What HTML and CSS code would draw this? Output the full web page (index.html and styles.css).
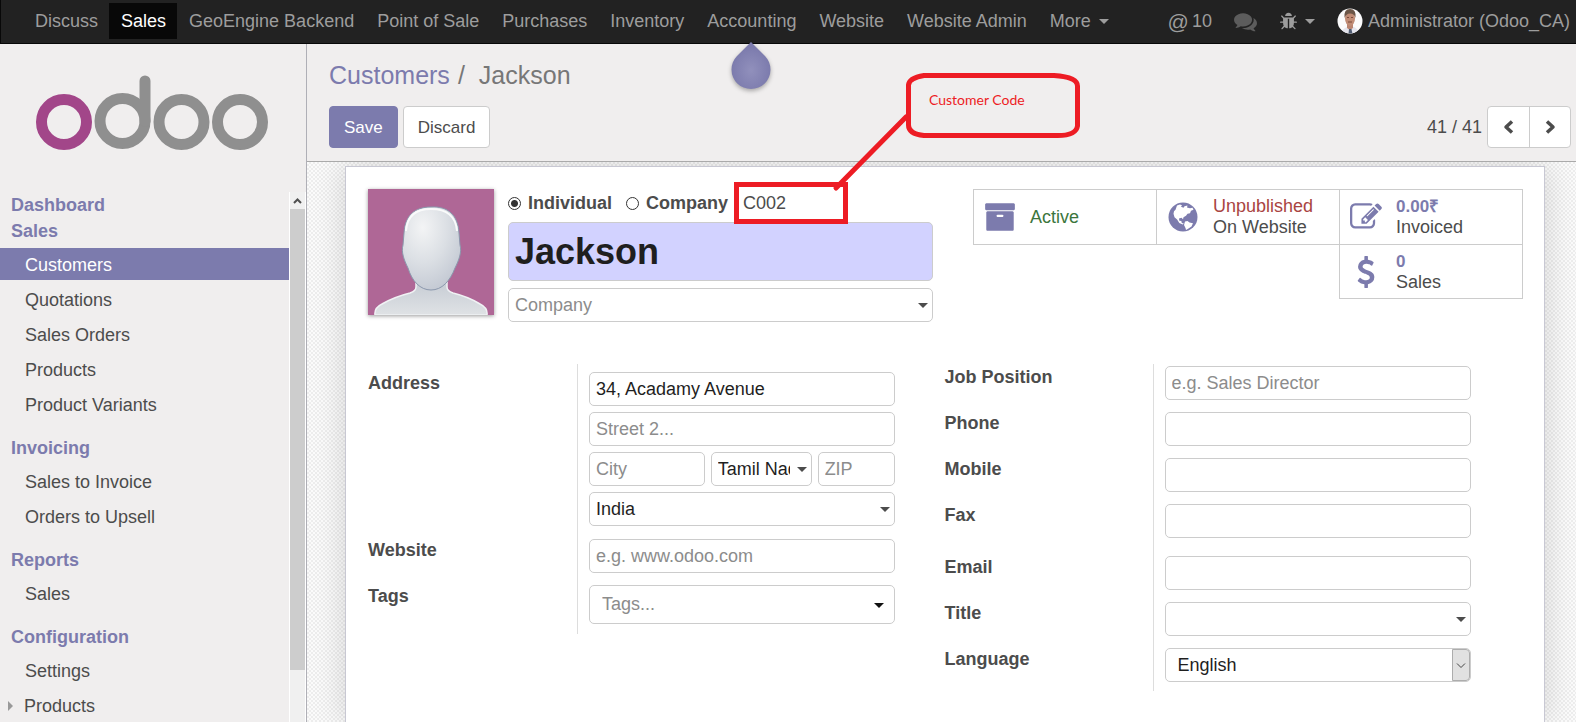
FILE: index.html
```html
<!DOCTYPE html>
<html lang="en">
<head>
<meta charset="utf-8">
<title>Jackson - Odoo</title>
<link rel="stylesheet" href="styles.css">
</head>
<body>
<nav class="navbar">
  <ul class="nav-menu">
    <li><a href="#">Discuss</a></li>
    <li><a href="#" class="current">Sales</a></li>
    <li><a href="#">GeoEngine Backend</a></li>
    <li><a href="#">Point of Sale</a></li>
    <li><a href="#">Purchases</a></li>
    <li><a href="#">Inventory</a></li>
    <li class="has-tip"><a href="#">Accounting</a>
      <svg class="tip" viewBox="0 0 44 54" aria-hidden="true">
        <defs><radialGradient id="drop" cx=".5" cy=".6" r=".5"><stop offset="0" stop-color="#9190bc"/><stop offset="1" stop-color="#7c7bad"/></radialGradient></defs>
        <path d="M22 0 L36 14 A19.500 19.500 0 1 1 8 14 Z" fill="url(#drop)"/>
      </svg>
    </li>
    <li><a href="#">Website</a></li>
    <li><a href="#">Website Admin</a></li>
    <li><a href="#">More <span class="caret"></span></a></li>
  </ul>
  <ul class="nav-tools">
    <li><a href="#" class="mentions"><span class="at">@</span> 10</a></li>
    <li><a href="#" class="dim" aria-label="Messages"><svg width="23" height="23" viewBox="0 0 1792 1792"><path d="M1408 768q0 139-94 257t-256.500 186.500-353.500 68.500q-86 0-176-16-124 88-278 128-36 9-86 16h-3q-11 0-20.500-8t-11.500-21q-1-3-1-6.500t.5-6.500 2-6l2.500-5 3.500-5.500 4-5 4.500-5 4-4.500q5-6 23-25t26-29.500 22.500-29 25-38.500 20.500-44q-124-72-195-177t-71-224q0-139 94-257t256.500-186.500 353.500-68.500 353.500 68.500 256.500 186.500 94 257zm384 256q0 120-71 224.500t-195 176.500q10 24 20.500 44t25 38.500 22.500 29 26 29.500 23 25q1 1 4 4.500t4.500 5 4 5 3.500 5.500l2.500 5 2 6 .5 6.500-1 6.500q-3 14-13 22t-22 7q-50-7-86-16-154-40-278-128-90 16-176 16-271 0-472-132 58 4 88 4 161 0 309-45t264-129q125-92 192-212t67-254q0-77-23-152 129 71 204 178t75 230z"/></svg></a></li>
    <li><a href="#" aria-label="Debug"><svg width="19" height="19" viewBox="0 0 1792 1792"><path d="M1696 960q0 26-19 45t-45 19h-224q0 171-67 290l208 209q19 19 19 45t-19 45q-18 19-45 19t-45-19l-198-197q-5 5-15 13t-42 28.500-65 36.500-82 29-97 13v-896h-128v896q-51 0-101.500-13.500t-87-33-66-39-43.500-32.500l-15-14-183 207q-20 21-48 21-24 0-43-16-19-18-20.500-44.500t15.500-46.500l202-227q-58-114-58-274h-224q-26 0-45-19t-19-45 19-45 45-19h224v-294l-173-173q-19-19-19-45t19-45 45-19 45 19l173 173h844l173-173q19-19 45-19t45 19 19 45-19 45l-173 173v294h224q26 0 45 19t19 45zm-480-576h-640q0-133 93.500-226.500t226.500-93.500 226.500 93.500 93.500 226.500z"/></svg><span class="caret"></span></a></li>
    <li><a href="#">
      <svg class="user-pic" width="26" height="26" viewBox="0 0 26 26" aria-hidden="true">
        <defs><clipPath id="round"><circle cx="13" cy="13" r="12.500"/></clipPath></defs>
        <g clip-path="url(#round)">
          <rect width="26" height="26" fill="#fbfbfc"/>
          <path d="M3 26 Q5 21 10 19 L17 19 Q21 21 23 26Z" fill="#e4e4ec"/>
          <path d="M10 16h6v4l-3 2-3-2z" fill="#b98470"/>
          <ellipse cx="13" cy="10.500" rx="5" ry="7.500" fill="#c08c76"/>
          <path d="M7.500 10Q6.500 1 13 1Q19.500 1 18.500 10Q17.500 5.500 13 5.500Q9 5.500 7.500 10Z" fill="#6b5648"/>
          <path d="M10 9.500h2M14 9.500h2M11 14h4" stroke="#7a4a3b" stroke-width="1"/>
          <path d="M12 21h2.500l1 5h-4z" fill="#4e5a70"/>
        </g>
      </svg>
      Administrator (Odoo_CA)</a></li>
  </ul>
</nav>
<div class="shell">
  <aside class="sidebar">
    <svg class="logo" viewBox="0 0 234 76" role="img" aria-label="odoo">
      <g fill="none" stroke-width="11">
        <circle cx="29" cy="47" r="22.500" stroke="#a24689"/>
        <g stroke="#8f8f8f">
          <circle cx="87.500" cy="46" r="22.500"/>
          <path d="M110 6v40" stroke-linecap="round"/>
          <circle cx="146.500" cy="47" r="22.500"/>
          <circle cx="205" cy="47" r="22.500"/>
        </g>
      </g>
    </svg>
    <div class="menu-area">
      <div class="menu">
        <h2>Dashboard</h2>
        <section>
          <h2>Sales</h2>
          <ul>
            <li><a href="#" class="active">Customers</a></li>
            <li><a href="#">Quotations</a></li>
            <li><a href="#">Sales Orders</a></li>
            <li><a href="#">Products</a></li>
            <li><a href="#">Product Variants</a></li>
          </ul>
        </section>
        <section class="spaced">
          <h2>Invoicing</h2>
          <ul>
            <li><a href="#">Sales to Invoice</a></li>
            <li><a href="#">Orders to Upsell</a></li>
          </ul>
        </section>
        <section class="spaced">
          <h2>Reports</h2>
          <ul>
            <li><a href="#">Sales</a></li>
          </ul>
        </section>
        <section class="spaced">
          <h2>Configuration</h2>
          <ul>
            <li><a href="#">Settings</a></li>
            <li><a href="#" class="toggle">Products</a></li>
          </ul>
        </section>
      </div>
      <div class="scrollbar" aria-hidden="true">
        <svg width="15" height="17" viewBox="0 0 15 17"><path d="M4 11 L7.500 7.500 L11 11" fill="none" stroke="#505050" stroke-width="2"/></svg>
        <div class="thumb"></div>
      </div>
    </div>
  </aside>
  <main class="main">
    <header class="panel">
      <div class="breadcrumb"><a href="#">Customers</a><span class="slash">/</span><span>Jackson</span></div>
      <div class="actions">
        <button type="button" class="btn primary">Save</button>
        <button type="button" class="btn">Discard</button>
        <div class="pager">
          <span>41 / 41</span>
          <div class="pager-buttons">
            <button type="button" aria-label="Previous"><svg width="18" height="18" viewBox="0 0 18 18"><path d="M12 3.500 L6 9 L12 14.500" fill="none" stroke="currentColor" stroke-width="3.500" stroke-linejoin="round"/></svg></button>
            <button type="button" aria-label="Next"><svg width="18" height="18" viewBox="0 0 18 18"><path d="M6 3.500 L12 9 L6 14.500" fill="none" stroke="currentColor" stroke-width="3.500" stroke-linejoin="round"/></svg></button>
          </div>
        </div>
      </div>
    </header>
    <div class="content">
      <form class="sheet">
        <div class="top">
          <svg class="avatar" viewBox="0 0 126 126" role="img" aria-label="Contact picture">
            <defs>
              <radialGradient id="face" cx=".35" cy=".25" r=".85"><stop offset="0" stop-color="#f3f4f5"/><stop offset=".5" stop-color="#dbdfe4"/><stop offset="1" stop-color="#bfc5d0"/></radialGradient>
              <linearGradient id="body" x1="0" y1="0" x2="0" y2="1"><stop offset="0" stop-color="#c3c9d2"/><stop offset="1" stop-color="#dfe2e5"/></linearGradient>
            </defs>
            <rect width="126" height="126" fill="#af6796"/>
            <path d="M7 126 Q6 119 14 115 Q26 108 42 104 Q48 102 48 98 L48 88 L79 88 L79 98 Q79 102 85 104 Q101 108 112 115 Q120 119 119 126Z" fill="url(#body)" stroke="#f0f2f4" stroke-width="1.500"/>
            <path d="M63 18 C80 17 90 26 91 44 L92 56 C94 63 91 71 87 79 C82 92 74 101 63 101 C52 101 44 92 40 79 C36 71 33 63 35 56 L36 44 C37 27 46 18 63 18Z" fill="url(#face)" stroke="#8b98ad" stroke-width="1"/>
            <path d="M38 42 C39 27 47 20 63 20 C79 20 88 28 89 42" fill="none" stroke="#fafbfb" stroke-width="2"/>
          </svg>
          <div class="title">
            <div class="kind">
              <input type="radio" name="kind" id="individual" checked><label for="individual">Individual</label>
              <input type="radio" name="kind" id="company-kind"><label for="company-kind">Company</label>
              <div class="code">
                <input type="text" value="C002" aria-label="Customer Code">
                <svg class="callout" viewBox="0 0 350 156" aria-hidden="true">
                  <g fill="none" stroke="#ed1c24" stroke-width="5">
                    <rect x="4.500" y="114.500" width="109" height="37"/>
                    <path d="M104 118 L174 47" stroke-linecap="round"/>
                    <path d="M192 5.500 H322 Q345.500 7 345.500 16 V56 Q344 66 324 65.500 H192 Q176 64 176.500 54 V15 Q177 8 192 5.500Z"/>
                  </g>
                  <text x="197" y="35" class="callout-text">Customer Code</text>
                </svg>
              </div>
            </div>
            <input type="text" class="field name" value="Jackson" aria-label="Name">
            <div class="pick"><select class="field empty" aria-label="Company"><option>Company</option></select></div>
          </div>
          <div class="stats">
            <button type="button" class="stat">
              <svg width="32" height="32" viewBox="0 0 1792 1792"><path d="M1088 832q0-26-19-45t-45-19h-256q-26 0-45 19t-19 45 19 45 45 19h256q26 0 45-19t19-45zm576-192v960q0 26-19 45t-45 19h-1408q-26 0-45-19t-19-45v-960q0-26 19-45t45-19h1408q26 0 45 19t19 45zm64-448v256q0 26-19 45t-45 19h-1536q-26 0-45-19t-19-45v-256q0-26 19-45t45-19h1536q26 0 45 19t19 45z"/></svg>
              <span class="green">Active</span>
            </button>
            <button type="button" class="stat">
              <svg width="32" height="32" viewBox="0 0 32 32"><circle cx="16" cy="16" r="14.500"/><path fill="#fff" d="M10 4.500l3-1 2 .8-1 1.500 2.500 1 1-1.500 3-.8-.5 2 3 .7 2.500-.5 1 2-2.500 1-1 2.500-2.500.5-1.500 2-2.500 1.500-.5 2-1.500-1.500-2.500.8.3 2.200 2 .2.500 2 2 .5-1 1.200-3.500-1.700-2.200-3.500-2.600-2.200-1-3.500.5-2.500 1.500-1.500zM18 20.500l2.500-.5 2 1.500 3.500.8-1.500 3.200-3 2-2.500 1.500-.5-2-1.500-3z"/></svg>
              <span><span class="red">Unpublished</span><br>On Website</span>
            </button>
            <button type="button" class="stat">
              <svg width="32" height="32" viewBox="0 0 1792 1792"><path d="M888 1184l116-116-152-152-116 116v56h96v96h56zm440-720q-16-16-33 1l-350 350q-17 17-1 33t33-1l350-350q17-17 1-33zm80 594v190q0 119-84.500 203.500t-203.500 84.500h-832q-119 0-203.500-84.500t-84.500-203.500v-832q0-119 84.500-203.500t203.500-84.500h832q63 0 117 25 15 7 18 23 3 17-9 29l-49 49q-14 14-32 8-23-6-45-6h-832q-66 0-113 47t-47 113v832q0 66 47 113t113 47h832q66 0 113-47t47-113v-126q0-13 9-22l64-64q15-15 35-7t20 29zm-96-738l288 288-672 672h-288v-288zm444 132l-92 92-288-288 92-92q28-28 68-28t68 28l152 152q28 28 28 68t-28 68z"/></svg>
              <span><b>0.00₹</b><br>Invoiced</span>
            </button>
            <button type="button" class="stat last">
              <svg width="32" height="32" viewBox="0 0 1792 1792"><path d="M1362 1185q0 153-99.500 263.500t-258.500 136.500v175q0 14-9 23t-23 9h-135q-13 0-22.500-9.500t-9.500-22.500v-175q-66-9-127.500-31t-101.500-44.500-74-48-46.500-37.500-17.500-18q-17-21-2-41l103-135q7-10 23-12 15-2 24 9l2 2q113 99 243 125 37 8 74 8 81 0 142.500-43t61.500-122q0-28-15-53t-33.500-42-58.500-37.500-66-32-80-32.500q-39-16-61.500-25t-61.500-26.500-62.500-31-56.500-35.500-53.500-42.500-43.500-49-35.500-58-21-66.500-8.500-78q0-138 98-242t255-134v-180q0-13 9.500-22.500t22.500-9.500h135q14 0 23 9t9 23v176q57 6 110.500 23t87 33.500 63.500 37.500 39 29 15 14q17 18 5 38l-81 146q-8 15-23 16-14 3-27-7-3-3-14.500-12t-39-26.500-58.500-32-74.500-26-85.500-11.500q-95 0-155 43t-60 111q0 26 8.500 48t29.500 41.500 39.500 33 56 31 60.500 27 70 27.500q53 20 81 31.500t76 35 75.500 42.500 62 50 53 63.500 31.500 76.500 13 94z"/></svg>
              <span><b>0</b><br>Sales</span>
            </button>
          </div>
        </div>
        <div class="groups">
          <div class="group left">
            <div class="row">
              <label for="street">Address</label>
              <div class="value stack">
                <input type="text" class="field" id="street" value="34, Acadamy Avenue">
                <input type="text" class="field" placeholder="Street 2..." aria-label="Street 2">
                <div class="city">
                  <input type="text" class="field" placeholder="City" aria-label="City">
                  <div class="pick state"><select class="field" aria-label="State"><option>Tamil Nadu</option></select></div>
                  <input type="text" class="field" placeholder="ZIP" aria-label="ZIP">
                </div>
                <div class="pick"><select class="field" aria-label="Country"><option>India</option></select></div>
              </div>
            </div>
            <div class="row">
              <label for="website">Website</label>
              <div class="value"><input type="text" class="field" id="website" placeholder="e.g. www.odoo.com"></div>
            </div>
            <div class="row">
              <label for="tags">Tags</label>
              <div class="value"><div class="pick tags"><input type="text" class="field" id="tags" placeholder="Tags..."></div></div>
            </div>
          </div>
          <div class="group right">
            <div class="row"><label for="job">Job Position</label><div class="value"><input type="text" class="field" id="job" placeholder="e.g. Sales Director"></div></div>
            <div class="row"><label for="phone">Phone</label><div class="value"><input type="text" class="field" id="phone"></div></div>
            <div class="row"><label for="mobile">Mobile</label><div class="value"><input type="text" class="field" id="mobile"></div></div>
            <div class="row after"><label for="fax">Fax</label><div class="value"><input type="text" class="field" id="fax"></div></div>
            <div class="row"><label for="email">Email</label><div class="value"><input type="text" class="field" id="email"></div></div>
            <div class="row"><label for="ptitle">Title</label><div class="value"><div class="pick"><select class="field" id="ptitle"><option></option></select></div></div></div>
            <div class="row"><label for="lang">Language</label><div class="value"><div class="lang">
              <select class="field" id="lang"><option>English</option></select>
              <svg viewBox="0 0 18 32" aria-hidden="true"><path d="M.500.500H14q3.500 0 3.500 3.500v24q0 3.500-3.500 3.500H.500z" fill="#e1e1e1" stroke="#adadad"/><path d="M5 14.500l4 4 4-4" fill="none" stroke="#444"/></svg>
            </div></div></div>
          </div>
        </div>
      </form>
    </div>
  </main>
</div>
</body>
</html>
```
FILE: styles.css
```css
* { box-sizing: border-box; }
body {
  margin: 0;
  height: 100vh;
  overflow: hidden;
  display: flex;
  flex-direction: column;
  font-family: "Liberation Sans", Arial, sans-serif;
  font-size: 18px;
  line-height: 21px;
  color: #4c4c4c;
  background: #f0eeee;
}
ul { list-style: none; margin: 0; padding: 0; }
a { color: inherit; text-decoration: none; }
button, input, select { font: inherit; color: inherit; margin: 0; }
svg { fill: currentColor; flex: none; }

/* Top bar */
.navbar {
  flex: none;
  display: flex;
  justify-content: space-between;
  height: 44px;
  padding: 3px 0 4px 22px;
  background: #222;
  border-bottom: 1px solid #080808;
  border-left: 1px solid #080808;
  color: #9d9d9d;
  white-space: nowrap;
}
.nav-menu, .nav-tools { display: flex; }
.nav-menu a, .nav-tools a { display: flex; align-items: center; height: 36px; }
.nav-menu a { padding: 0 11px 0 12px; }
.nav-tools a { padding: 0 11px; gap: 5px; }
.nav-tools .mentions { gap: 3px; }
.nav-tools li:last-child a { padding-right: 6px; }
.nav-menu .current { background: #080808; color: #fff; }
.nav-tools .dim { color: #5c5c5c; }
.at { font-size: 21px; }
.caret {
  border: 5px solid transparent;
  border-top-color: currentColor;
  border-bottom: 0;
  margin-left: 8px;
}
.nav-tools .caret { margin-left: 2px; }
.has-tip { position: relative; }
.tip {
  position: absolute;
  left: 50%;
  top: 39px;
  width: 44px;
  height: 54px;
  margin-left: -22px;
  z-index: 2;
  filter: drop-shadow(0 2px 2px rgba(0, 0, 0, .3));
}

.shell { flex: 1; display: flex; min-height: 0; }

/* Sidebar */
.sidebar {
  flex: none;
  width: 307px;
  display: flex;
  flex-direction: column;
  border-right: 1px solid #afafb6;
}
.logo { width: 234px; margin: 31px 0 41px 35px; }
.menu-area { flex: 1; display: flex; min-height: 0; }
.menu { flex: 1; overflow: hidden; }
.menu h2 { margin: 0; padding-left: 11px; font-size: 18px; line-height: 26px; color: #7c7bad; }
.menu ul { display: flex; flex-direction: column; gap: 3px; margin-top: 4px; }
.menu .spaced { margin-top: 15px; }
.menu li a { display: block; padding: 2px 0 0 25px; line-height: 30px; }
.menu .active { background: #7c7bad; color: #fff; }
.menu .toggle { display: flex; align-items: center; padding-left: 8px; gap: 11px; }
.toggle::before {
  content: "";
  border: 5px solid transparent;
  border-left-color: #999;
  border-right: 0;
}
.scrollbar {
  width: 17px;
  display: flex;
  flex-direction: column;
  background: #f0f0f0;
  border-left: 1px solid #fff;
  border-right: 1px solid #fff;
}
.thumb { height: 87%; background: #cdcdcd; }

/* Control panel */
.main { flex: 1; min-width: 0; display: flex; flex-direction: column; }
.panel {
  position: relative;
  z-index: 1;
  flex: none;
  padding: 16px 5px 13px 22px;
  background: #f0eeee;
  border-bottom: 1px solid #aaa;
}
.breadcrumb { font-size: 25px; line-height: 30px; color: #777; }
.breadcrumb a { color: #7c7bad; }
.breadcrumb .slash { margin: 0 14px 0 8px; }
.actions { display: flex; align-items: center; gap: 5px; margin-top: 16px; }
.btn {
  height: 42px;
  padding: 0 14px;
  font-size: 17px;
  background: #fff;
  border: 1px solid #ccc;
  border-radius: 4px;
}
.btn.primary { background: #7c7bad; border-color: #7c7bad; color: #fff; }
.pager { margin-left: auto; display: flex; align-items: center; gap: 5px; }
.pager-buttons { display: flex; border: 1px solid #ccc; border-radius: 4px; background: #fff; }
.pager-buttons button {
  display: grid;
  place-items: center;
  width: 41px;
  height: 40px;
  padding: 0;
  border: 0;
  background: none;
}
.pager-buttons button + button { border-left: 1px solid #ccc; }

/* Form sheet */
.content {
  flex: 1;
  display: flex;
  min-height: 0;
  padding: 4px 31px 0 38px;
  background: conic-gradient(#ededed 25%, #fbfbfb 0 50%, #ededed 0 75%, #fbfbfb 0) 0 0 / 4px 4px;
}
.sheet {
  flex: 1;
  min-width: 0;
  padding: 22px 21px 0 22px;
  background: #fff;
  border: 1px solid #c8c8d3;
  border-bottom: 0;
  box-shadow: 0 0 30px rgba(0, 0, 0, .15);
}
.top { display: flex; align-items: flex-start; }
.avatar { width: 126px; height: 126px; box-shadow: 0 1px 4px rgba(0, 0, 0, .4); }
.title { width: 425px; margin-left: 14px; }
.kind { display: flex; align-items: center; height: 27px; padding-top: 2px; margin-bottom: 6px; font-weight: bold; }
.kind input[type="radio"] {
  appearance: none;
  width: 13px;
  height: 13px;
  margin-right: 7px;
  border: 1px solid #333;
  border-radius: 50%;
  background: #fff;
}
.kind input[type="radio"]:checked { background: radial-gradient(circle, #333 0 3px, #fff 4px); }
.kind label + input[type="radio"] { margin-left: 14px; }
.code { position: relative; margin-left: 15px; }
.code input { width: 96px; padding: 0; border: 0; background: none; font-weight: normal; outline: 0; }
.callout { position: absolute; left: -11px; bottom: -12px; width: 350px; height: 156px; z-index: 3; pointer-events: none; }
.callout-text { fill: #ed1c24; font: 14px Lato, sans-serif; }

.field {
  display: block;
  width: 100%;
  min-width: 0;
  height: 34px;
  padding: 0 6px;
  border: 1px solid #ccc;
  border-radius: 5px;
  background: #fff;
  color: #1f1f1f;
  appearance: none;
}
.field::placeholder { color: #8c8c8c; opacity: 1; }
.field.empty { color: #8c8c8c; }
.field.name { height: 59px; margin-bottom: 7px; background: #d2d2ff; font-size: 36px; font-weight: bold; }
.pick { position: relative; }
.pick .field { padding-right: 21px; }
.pick::after {
  content: "";
  position: absolute;
  right: 5px;
  top: 15px;
  border: 5px solid transparent;
  border-top-color: #4c4c4c;
  border-bottom: 0;
}

.stats { display: grid; grid-template-columns: repeat(3, 183px); margin-left: auto; }
.stat {
  display: flex;
  align-items: center;
  gap: 14px;
  height: 56px;
  margin-left: -1px;
  padding: 0 0 0 10px;
  border: 1px solid #ccc;
  background: #fff;
  text-align: left;
}
.stat.last { grid-column: 3; height: 54px; border-top: 0; }
.stat svg, .stat b { color: #7c7bad; }
.stat b { font-size: 17px; }
.green { color: #3c763d; }
.red { color: #a94442; }

.groups { display: grid; grid-template-columns: 1fr 1fr; align-items: start; margin: 42px 2px 0 0; }
.group { margin-right: 50px; background: linear-gradient(#ddd, #ddd) 208px 0 / 1px 100% no-repeat; }
.group.left { padding: 8px 0 10px; background-position-x: 209px; }
.group.right { padding: 2px 0 9px; }
.row { display: flex; margin-bottom: 12px; }
.row:last-child { margin-bottom: 0; }
.row.after { margin-bottom: 18px; }
.row > label { flex: none; width: 220px; padding-top: 1px; font-weight: bold; }
.left .row > label { width: 221px; }
.value { flex: 1; min-width: 0; }
.stack { display: flex; flex-direction: column; gap: 6px; padding-bottom: 1px; }
.city { display: grid; grid-template-columns: 116fr 101fr 77fr; gap: 6px; }
.tags .field { height: 39px; padding-left: 12px; }
.tags::after { top: 18px; right: 11px; border-top-color: #111; }
.lang { position: relative; }
.lang .field { padding-left: 12px; }
.lang svg { position: absolute; right: 1px; top: 1px; width: 18px; height: 32px; }
```
